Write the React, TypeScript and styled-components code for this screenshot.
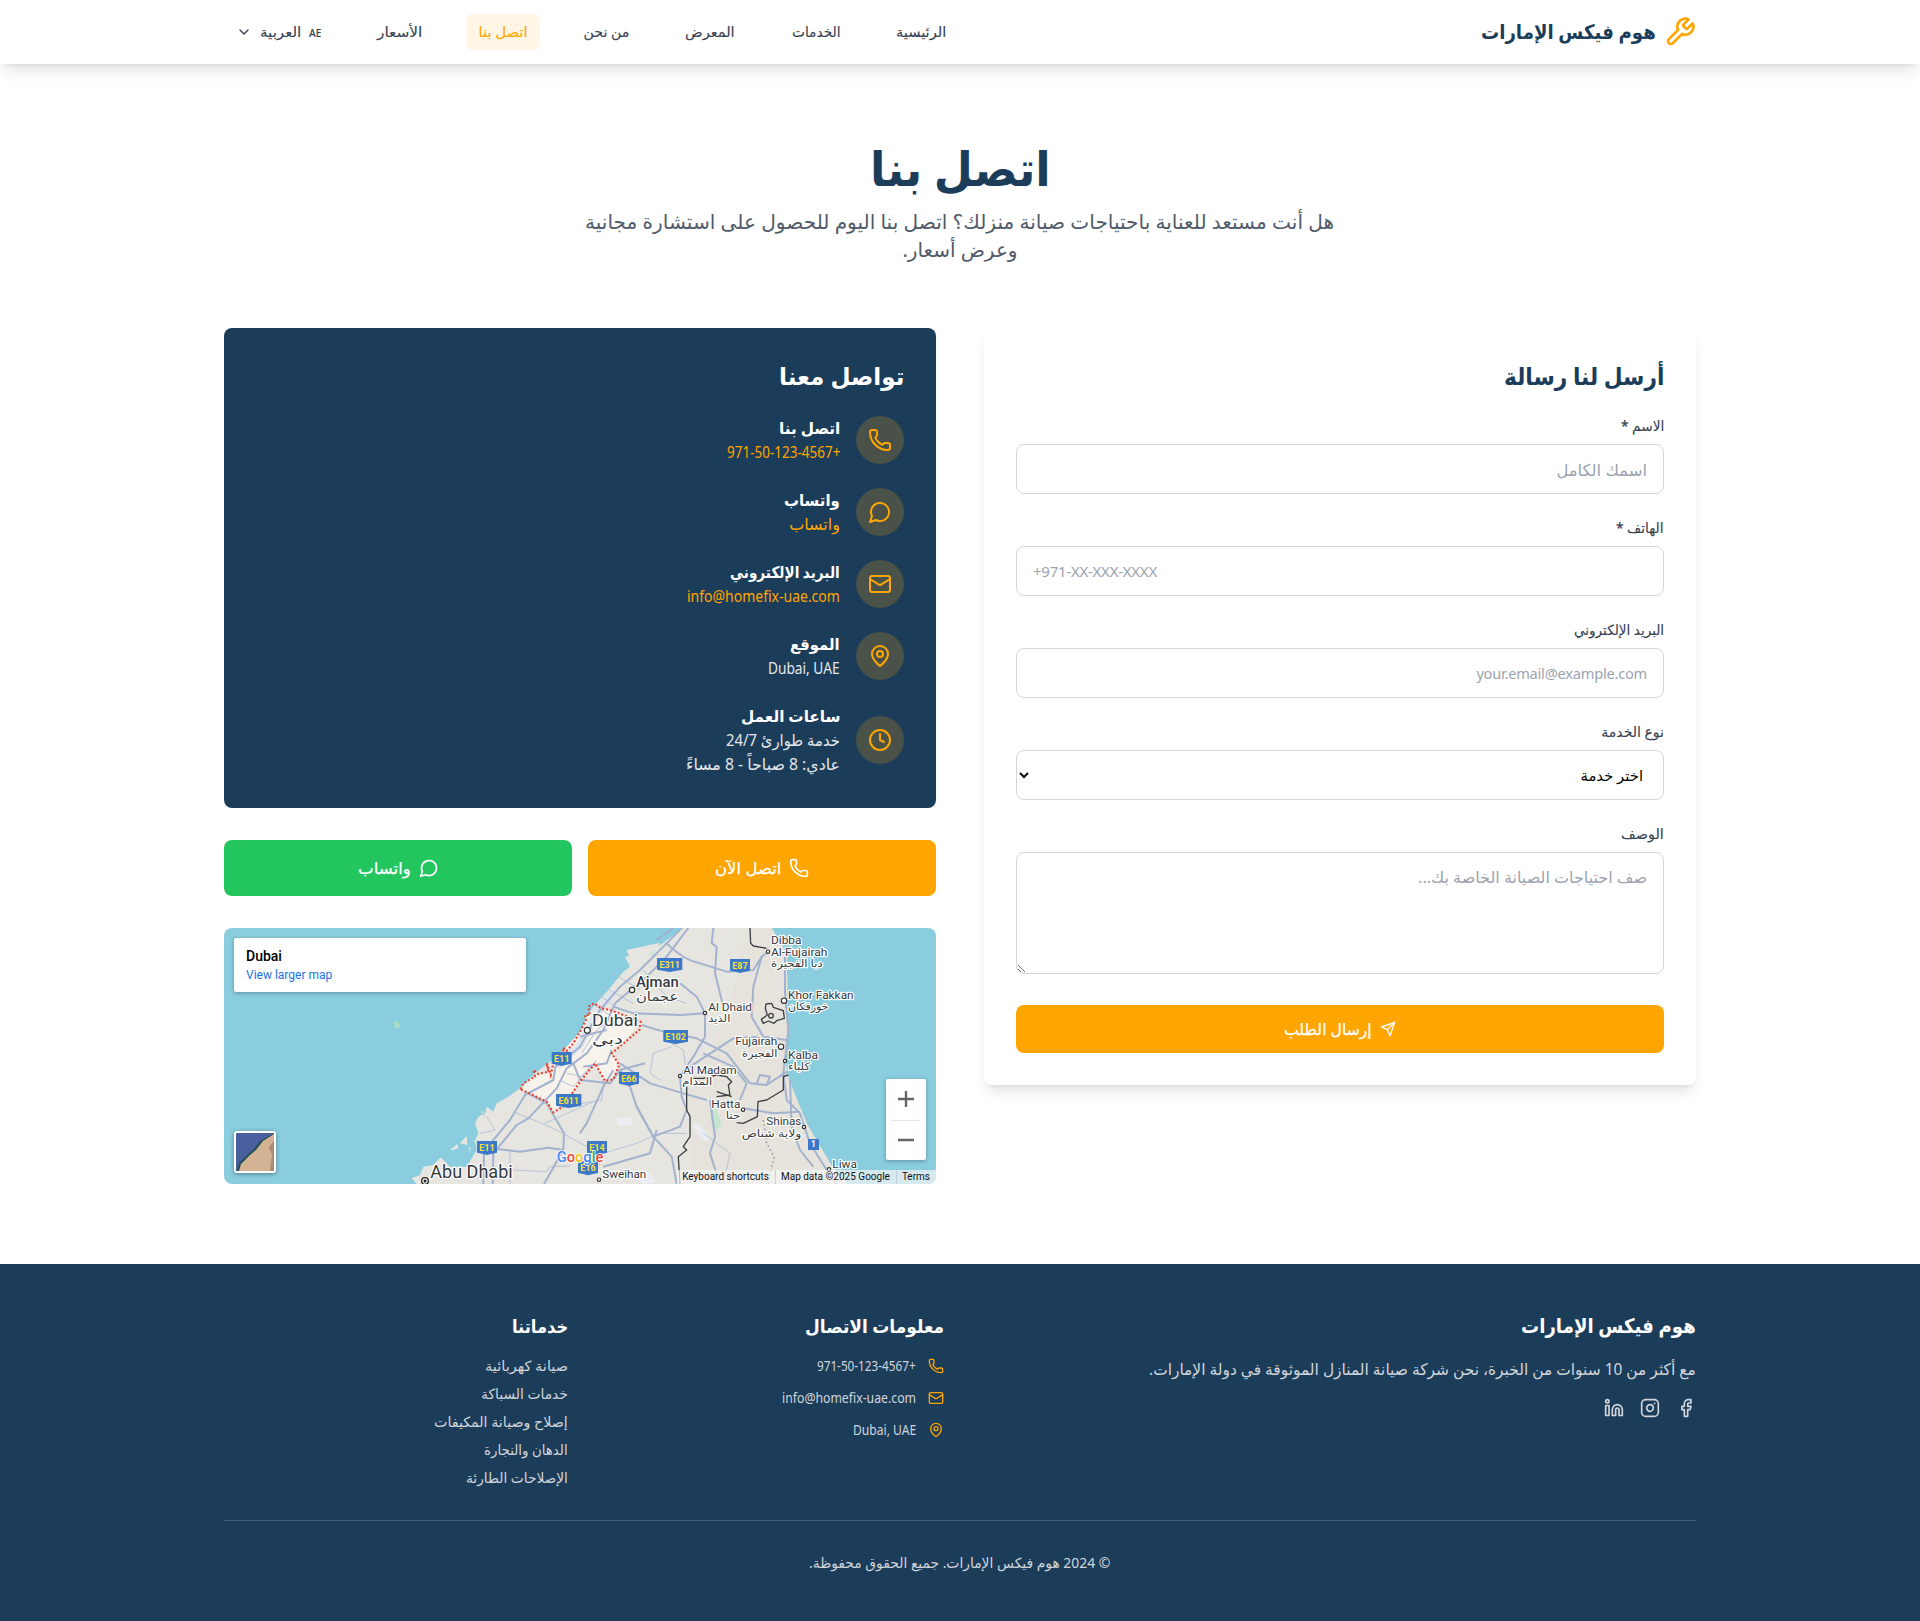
import React, { useLayoutEffect, useRef, useState } from "react";
import styled, { createGlobalStyle, css } from "styled-components";
import { ChevronDown, Phone, Clock, Facebook, Instagram, Linkedin } from "lucide-react";

const navy = "#1c3d5a";
const orange = "#ffa500";
const sans = `"Noto Sans", "DejaVu Sans", sans-serif`;

const GlobalStyle = createGlobalStyle`
  *, *::before, *::after { box-sizing: border-box; }
  body { margin: 0; background: #fff; font-family: ${sans}; font-size: 16px; line-height: 24px; color: #111827; }
  h1, h2, h3, h4, p, ul { margin: 0; padding: 0; list-style: none; }
  a { color: inherit; text-decoration: none; }
  svg { display: block; flex-shrink: 0; }
`;

/* Stroke icons on a 24 unit grid */
type IconProps = { size: number };
const outline = (shape: React.ReactNode) =>
  function OutlineIcon({ size }: IconProps) {
    return (
      <svg width={size} height={size} viewBox="0 0 24 24" fill="none" stroke="currentColor" strokeWidth="2" strokeLinecap="round" strokeLinejoin="round">
        {shape}
      </svg>
    );
  };
const Wrench = outline(
  <path d="M14.7 6.3a1 1 0 0 0 0 1.4l1.6 1.6a1 1 0 0 0 1.4 0l3.77-3.77a6 6 0 0 1-7.94 7.94l-6.91 6.91a2.12 2.12 0 0 1-3-3l6.91-6.91a6 6 0 0 1 7.94-7.94l-3.76 3.76z" />
);
const MessageCircle = outline(<path d="M7.9 20A9 9 0 1 0 4 16.1L2 22Z" />);
const Mail = outline(
  <>
    <rect width="20" height="16" x="2" y="4" rx="2" />
    <path d="m22 7-8.97 5.7a1.94 1.94 0 0 1-2.06 0L2 7" />
  </>
);
const MapPin = outline(
  <>
    <path d="M20 10c0 6-8 12-8 12s-8-6-8-12a8 8 0 0 1 16 0Z" />
    <circle cx="12" cy="10" r="3" />
  </>
);
const Send = outline(
  <>
    <path d="m22 2-7 20-4-9-9-4Z" />
    <path d="M22 2 11 13" />
  </>
);

/* Keeps a label at a set measure whichever fallback font is in use. */
const FitOuter = styled.span<{ $w: number }>`
  display: inline-block;
  width: ${(p) => p.$w}px;
  white-space: nowrap;
  text-align: start;
  vertical-align: top;
`;
const FitInner = styled.span`
  display: inline-block;
  transform-origin: 100% 50%;
`;
function Fit({ w, children }: { w: number; children: React.ReactNode }) {
  const ref = useRef<HTMLSpanElement>(null);
  const [scale, setScale] = useState(1);
  useLayoutEffect(() => {
    if (ref.current) setScale(w / ref.current.offsetWidth);
  }, [w]);
  return (
    <FitOuter $w={w}>
      <FitInner ref={ref} style={{ transform: `scaleX(${scale})` }}>{children}</FitInner>
    </FitOuter>
  );
}

const medium = css`
  font-weight: 500;
  -webkit-text-stroke: 0.12px currentColor;
`;

const Page = styled.div`
  display: flex;
  flex-direction: column;
  min-height: 1621px;
`;
const Container = styled.div`
  width: 1472px;
  margin: 0 auto;
`;

/* Header */
const Header = styled.header`
  height: 64px;
  background: #fff;
  box-shadow: 0 10px 15px -3px rgba(0, 0, 0, 0.1), 0 4px 6px -4px rgba(0, 0, 0, 0.1);
`;
const HeaderRow = styled(Container)`
  height: 64px;
  display: flex;
  align-items: center;
  justify-content: space-between;
`;
const Logo = styled.a`
  display: flex;
  align-items: center;
  gap: 8px;
  color: ${navy};
  font-size: 20px;
  line-height: 28px;
  font-weight: 700;
  svg { color: ${orange}; }
`;
const Nav = styled.nav`
  display: flex;
  align-items: center;
  gap: 32px;
`;
const NavLink = styled.a<{ $active?: boolean }>`
  padding: 8px 12px;
  border-radius: 6px;
  font-size: 14px;
  line-height: 20px;
  ${medium}
  color: ${(p) => (p.$active ? orange : "#374151")};
  background: ${(p) => (p.$active ? "rgba(255,165,0,0.1)" : "transparent")};
`;
const Language = styled.button`
  display: flex;
  align-items: center;
  gap: 8px;
  padding: 8px 12px;
  border: 0;
  background: none;
  font: 500 14px/20px ${sans};
  ${medium}
  color: #374151;
`;
const Code = styled.span`
  font-size: 11px;
  padding-top: 1px;
`;

/* Hero */
const Main = styled.main`
  padding: 80px 0;
`;
const Hero = styled.section`
  text-align: center;
  margin-bottom: 64px;
`;
const Title = styled.h1`
  font-size: 48px;
  line-height: 48px;
  font-weight: 700;
  color: ${navy};
  margin-bottom: 16px;
`;
const Lead = styled.p`
  width: 768px;
  margin: 0 auto;
  display: flex;
  flex-direction: column;
  align-items: center;
  font-size: 20px;
  line-height: 28px;
  color: #525b69;
`;

/* Columns */
const Columns = styled.div`
  display: grid;
  grid-template-columns: 1fr 1fr;
  gap: 48px;
  align-items: start;
`;
const FormCard = styled.form`
  padding: 32px;
  border-radius: 8px;
  background: #fff;
  box-shadow: 0 10px 15px -3px rgba(0, 0, 0, 0.1), 0 4px 6px -4px rgba(0, 0, 0, 0.1);
`;
const CardTitle = styled.h2<{ $light?: boolean }>`
  font-size: 24px;
  line-height: 32px;
  font-weight: 700;
  margin-bottom: 24px;
  color: ${(p) => (p.$light ? "#fff" : navy)};
`;
const Field = styled.div`
  display: flex;
  flex-direction: column;
  margin-bottom: 24px;
`;
const Label = styled.label`
  font-size: 14px;
  line-height: 20px;
  ${medium}
  color: #374151;
  margin-bottom: 8px;
`;
type ControlProps = { $size?: number; $tracking?: number };
const control = css<ControlProps>`
  width: 100%;
  padding: 12px 16px;
  border: 1px solid #d1d5db;
  border-radius: 8px;
  background: #fff;
  font: 400 ${(p) => p.$size ?? 16}px/24px ${sans};
  letter-spacing: ${(p) => p.$tracking ?? 0}px;
  color: #000;
  &::placeholder { color: #9ca3af; opacity: 1; }
`;
const Input = styled.input<ControlProps>`
  ${control}
  height: 50px;
`;
const Select = styled.select<ControlProps>`
  ${control}
  height: 50px;
`;
const Textarea = styled.textarea<ControlProps>`
  ${control}
  height: 122px;
  margin-bottom: 7px;
`;
const Button = styled.button<{ $color: string; $height: number }>`
  width: 100%;
  height: ${(p) => p.$height}px;
  display: flex;
  align-items: center;
  justify-content: center;
  gap: 8px;
  border: 0;
  border-radius: 8px;
  background: ${(p) => p.$color};
  color: #fff;
  font: 500 16px/24px ${sans};
  -webkit-text-stroke: 0.25px currentColor;
`;

const Side = styled.div`
  display: flex;
  flex-direction: column;
  gap: 32px;
`;
const InfoCard = styled.section`
  padding: 32px;
  border-radius: 8px;
  background: ${navy};
  color: #fff;
`;
const InfoList = styled.ul`
  display: flex;
  flex-direction: column;
  gap: 24px;
`;
const InfoItem = styled.li`
  display: flex;
  align-items: center;
  gap: 16px;
`;
const IconDisc = styled.div`
  width: 48px;
  height: 48px;
  border-radius: 50%;
  display: flex;
  align-items: center;
  justify-content: center;
  background: rgba(255, 165, 0, 0.2);
  color: ${orange};
`;
const InfoText = styled.div`
  display: flex;
  flex-direction: column;
  align-items: flex-start;
`;
const InfoName = styled.h3`
  font-size: 16px;
  line-height: 24px;
  font-weight: 700;
`;
const InfoValue = styled.p<{ $link?: boolean }>`
  line-height: 24px;
  color: ${(p) => (p.$link ? orange : "#e5e7eb")};
`;
const Actions = styled.div`
  display: grid;
  grid-template-columns: 1fr 1fr;
  gap: 16px;
`;

/* Map */
const MapFrame = styled.div`
  position: relative;
  height: 256px;
  border-radius: 8px;
  overflow: hidden;
  direction: ltr;
  font-family: Roboto, "DejaVu Sans", sans-serif;
`;
const MapCard = styled.div`
  position: absolute;
  left: 10px;
  top: 10px;
  width: 292px;
  height: 54px;
  padding: 9px 12px;
  background: #fff;
  border-radius: 2px;
  box-shadow: 0 1px 4px rgba(0, 0, 0, 0.3);
`;
const MapPlace = styled.div`
  font-size: 14px;
  line-height: 19px;
  font-weight: 500;
  color: #000;
`;
const MapLink = styled.div`
  font-size: 12px;
  line-height: 18px;
  color: #1a73e8;
`;
const Zoom = styled.div`
  position: absolute;
  right: 10px;
  bottom: 24px;
  width: 40px;
  height: 81px;
  display: flex;
  flex-direction: column;
  background: #fff;
  border-radius: 2px;
  box-shadow: 0 1px 4px rgba(0, 0, 0, 0.3);
`;
const ZoomHalf = styled.div`
  flex: 1;
  display: flex;
  align-items: center;
  justify-content: center;
  & + & { box-shadow: inset 0 1px 0 #e6e6e6; margin: 0 5px; }
`;
const Satellite = styled.div`
  position: absolute;
  left: 10px;
  bottom: 11px;
  width: 42px;
  height: 42px;
  border: 2px solid #fff;
  border-radius: 3px;
  overflow: hidden;
  box-shadow: 0 1px 4px rgba(0, 0, 0, 0.4);
`;
const Credits = styled.div`
  position: absolute;
  right: 0;
  bottom: 0;
  height: 14px;
  display: flex;
  font-size: 10px;
  line-height: 14px;
  color: #111;
  background: rgba(245, 245, 245, 0.7);
  span { padding: 0 6px 0 5px; white-space: nowrap; }
  span + span { border-left: 1px solid rgba(190, 205, 215, 0.9); }
`;

/* label, x, baseline, font size, drawn width */
type Place = [string, number, number, number, number];
const places: Place[] = [
  ["Abu Dhabi", 631, 773, 53, 247], ["Dubai", 1116, 318, 51, 138], ["دبي", 1116, 372, 40, 93],
  ["Ajman", 1248, 200, 42, 128], ["عجمان", 1248, 242, 38, 127],
  ["Dibba", 1653, 71, 35, 91], ["Al-Fujairah", 1653, 107, 35, 169], ["دبا الفجيرة", 1653, 141, 31, 155],
  ["Khor Fakkan", 1704, 236, 35, 197], ["خورفكان", 1704, 270, 31, 121],
  ["Al Dhaid", 1465, 273, 35, 131], ["الذيد", 1465, 306, 31, 66],
  ["Fujairah", 1546, 375, 35, 126], ["الفجيرة", 1566, 410, 31, 106],
  ["Kalba", 1704, 416, 35, 90], ["كلباء", 1704, 450, 31, 66],
  ["Al Madam", 1390, 461, 35, 160], ["المدام", 1387, 496, 31, 90],
  ["Hatta", 1474, 564, 35, 87], ["حتا", 1517, 598, 31, 44],
  ["Shinas", 1639, 615, 35, 105], ["ولاية شناص", 1565, 650, 31, 179],
  ["Liwa", 1837, 744, 35, 74], ["Sweihan", 1147, 774, 35, 132],
];
const shields: [string, number, number, number][] = [
  ["E11", 995, 396, 60], ["E611", 1008, 522, 76], ["E11", 771, 663, 60],
  ["E311", 1311, 114, 76], ["E87", 1530, 117, 60], ["E102", 1330, 330, 74],
  ["E66", 1197, 456, 60], ["E14", 1101, 663, 60], ["E16", 1074, 724, 60],
];
const towns: [number, number, number][] = [
  [1102, 331, 9], [1236, 210, 8], [1455, 279, 5], [1644, 95, 5], [1692, 242, 8],
  [1683, 380, 8], [1695, 423, 5], [1380, 468, 5], [1569, 569, 5], [1752, 621, 5],
  [1827, 748, 5], [1137, 779, 5],
];
const mainRoads = [
  "M790 792 L792 700 820 660 870 600 915 525 1000 480 1006 440 1080 380 1140 270 1200 200 1260 150 1360 50 1385 24",
  "M818 792 L820 700 890 615 925 595 1010 505 1040 445 1100 400 1150 330 1185 250 1280 170 1340 110 1405 24",
  "M830 687 L900 695 985 683 1030 690 M1080 640 L1100 610 1150 500 1180 450",
  "M915 515 L980 550 1032 640 1030 690 972 792",
  "M1060 430 L1080 480 1170 490 1200 450 1275 430 M1200 430 L1290 490 1390 520 1460 540 M1570 565 L1660 580 1740 575",
  "M1080 350 L1160 330 M1265 315 L1330 335 1430 355 1520 400 1590 490",
  "M1180 260 L1240 280 1380 285 1455 280",
  "M1310 60 L1360 24 M1340 70 Q1390 120 1440 130 L1520 155 1600 150 1625 110 1644 95",
  "M1480 24 L1475 70 1490 80 1485 160 1510 260",
  "M1625 110 L1600 200 1595 290 1630 350 1700 360",
  "M1380 190 L1430 230 1455 280 1455 350 1420 410 1380 470 1385 530 1400 570 1380 620 1300 650 1250 560 1230 500 1200 450",
  "M1250 560 L1300 650 1355 710 1370 792",
  "M1470 540 L1485 650 1470 700 1500 792",
  "M1695 110 L1695 220 1705 330 1690 460 1700 540 1740 580 1770 670 1820 750 1850 792",
  "M1710 480 L1715 620 1740 690 1780 740",
  "M1410 440 L1540 355 1620 350 M1450 400 L1540 440 1580 490 1560 540",
  "M1590 490 L1640 495 1700 455 M1610 490 L1620 465 1650 470 1640 495",
  "M1090 440 L1160 430 1175 390 M1150 740 L1290 700 1310 630",
];
const thinRoads = [
  "M880 575 L1000 625 1120 690 M870 690 L870 792 M880 750 L980 755 990 740 1050 738",
  "M975 610 L1120 545 M1030 560 L1145 540 1150 490 M780 640 L825 630 800 590 780 575",
  "M1355 380 L1300 400 1290 460 1320 480 M1355 370 L1390 390 1400 460 M1270 150 L1340 230 1400 250",
  "M1150 700 L1250 670 1320 640 1400 640 M1450 640 L1530 700 1510 792",
  "M1040 460 L1090 470 1130 420 M1020 480 L1060 500 1110 440 M1085 400 L1130 330 1170 300",
  "M1115 250 L1190 300 M1130 220 L1200 270 M1150 200 L1240 250 M1180 160 L1260 210",
];
const borders = [
  "M1590 24 L1592 70 1600 78 1640 85 M1638 252 L1655 250 1660 262 1690 272 1693 295 1670 302 1662 310 1645 303 1630 310 1624 298 1642 285 1636 265Z",
  "M1400 500 L1400 570 1410 590 1410 650 1390 680 1400 690 1375 710 1380 792",
  "M1490 530 L1530 525 1525 495 1535 485 1520 470 1490 465 1450 475 1420 475",
  "M1490 515 L1535 530 M1550 608 L1570 610 1612 590 1614 545 1640 540 1690 510 1690 470 1705 465",
];

function MapArt() {
  return (
    <svg width="712" height="256" viewBox="12 24 2136 768">
      <rect x="12" y="24" width="2136" height="768" fill="#89cddf" />
      <path fill="#e7e5e0" d="M575 775 L600 765 610 740 640 735 662 712 690 740 740 740 770 690 765 660 775 640 765 610 775 590 795 580 800 560 820 575 830 550 865 530 900 505 945 460 985 430 1030 390 1080 335 1100 290 1120 260 1160 215 1210 155 1230 140 1215 110 1245 105 1275 82 1320 75 1390 24 1655 24 1700 100 1702 200 1696 260 1705 330 1697 400 1700 460 1730 540 1760 610 1800 690 1840 745 1880 792 590 792Z" />
      <path fill="#e5e3db" d="M1580 24 L1655 24 1700 100 1702 200 1705 330 1697 400 1700 460 1760 610 1840 745 1880 792 1420 792 1400 500 1520 300Z" />
      <path fill="#e7e5e0" d="M690 690 L712 672 715 685 700 690Z M720 670 L740 648 742 675Z M1220 90 L1320 68 1310 82 1260 100 1235 130Z" />
      <g fill="#eaedf1">
        <rect x="1190" y="593" width="48" height="25" rx="10" />
        <path d="M1415 610 L1440 612 1470 655 1460 668 1430 640Z M1230 760 L1290 755 1310 785 1270 792Z" />
      </g>
      <path fill="#c3e5d2" d="M1475 560 L1490 565 1505 620 1485 630 1472 600Z M785 570 L793 578 785 580Z M760 665 L775 655 770 670Z M745 685 L752 680 750 695Z M1285 105 L1305 88 1300 108Z" />
      <path fill="#a9dfc0" d="M520 305 L533 303 540 315 538 324 525 323Z" />
      <path fill="#f7f3ea" d="M902 508 L945 465 990 455 1025 400 1080 335 1110 275 1170 270 1262 310 1175 400 1198 435 1180 480 1155 483 1125 430 1080 490 1000 577 980 545Z" />
      <g fill="none" stroke="#dfe5ee" strokeWidth="22" strokeLinejoin="round">
        <path d="M1010 440 L1080 375 1125 290 1180 215" />
      </g>
      <g fill="none" stroke="#b5c3da" strokeWidth="3" strokeLinejoin="round">{thinRoads.map((d) => <path key={d} d={d} />)}</g>
      <g fill="none" stroke="#a3b2cf" strokeWidth="6" strokeLinejoin="round">{mainRoads.map((d) => <path key={d} d={d} />)}</g>
      <g fill="none" stroke="#3c4043" strokeWidth="4" strokeLinejoin="round">
        {borders.map((d) => <path key={d} d={d} />)}
        <circle cx="1653" cy="287" r="7" />
        <path d="M1630 600 L1640 670 1662 710 1645 792" stroke="#8b9199" strokeDasharray="5 8" />
      </g>
      <path fill="none" stroke="#ea4335" strokeWidth="6.5" strokeDasharray="6 6" d="M902 508 L910 490 945 470 940 450 955 462 985 455 980 430 992 465 1000 430 1030 395 1030 383 1040 393 1060 370 1080 335 1098 300 1095 285 1110 285 1105 260 1122 250 1145 265 1170 270 1262 305 1258 330 1175 400 1198 435 1180 478 1155 483 1125 430 1080 485 1030 560 1000 577 980 545Z" />
      {shields.map(([t, x, y, w]) => (
        <g key={t + x}>
          <path fill="#3b78c9" d={`M${x} ${y} h${w} v35 q-15 2 -${w / 2} 7 q-${w / 2 - 15} -5 -${w / 2} -7Z`} />
          <text x={x + w / 2} y={y + 30} textAnchor="middle" fontSize="27" fontWeight="700" fill="#f7e03c">{t}</text>
        </g>
      ))}
      <rect x="1764" y="657" width="33" height="33" fill="#3b78c9" />
      <text x="1780" y="682" textAnchor="middle" fontSize="25" fontWeight="700" fill="#fff">1</text>
      <g fill="#fff" stroke="#333" strokeWidth="3.5">{towns.map(([x, y, r]) => <circle key={`${x}-${y}`} cx={x} cy={y} r={r} />)}</g>
      <circle cx="615" cy="783" r="10" fill="#fff" stroke="#222" strokeWidth="4" />
      <circle cx="615" cy="783" r="4.5" fill="#222" />
      <g fill="#34373b" stroke="#fff" strokeWidth="7" strokeLinejoin="round" paintOrder="stroke">
        {places.map(([t, x, y, s, w]) => (
          <text key={t} x={x} y={y} fontSize={s} fontWeight={s === 42 ? 500 : 400} textLength={w} lengthAdjust="spacingAndGlyphs">{t}</text>
        ))}
      </g>
      <text x="1010" y="727" fontSize="46" fontWeight="500" stroke="#fff" strokeWidth="5" paintOrder="stroke" textLength="140" lengthAdjust="spacingAndGlyphs"><tspan fill="#4285f4">G</tspan><tspan fill="#ea4335">o</tspan><tspan fill="#fbbc04">o</tspan><tspan fill="#4285f4">g</tspan><tspan fill="#34a853">l</tspan><tspan fill="#ea4335">e</tspan></text>
    </svg>
  );
}

/* Footer */
const Footer = styled.footer`
  background: ${navy};
  color: #fff;
  padding: 48px 0;
  height: 357px;
`;
const FooterGrid = styled.div`
  display: grid;
  grid-template-columns: 720px 344px 344px;
  gap: 32px;
`;
const Brand = styled.h3`
  font-size: 20px;
  line-height: 28px;
  font-weight: 700;
  margin-bottom: 16px;
`;
const About = styled.p`
  line-height: 26px;
  margin-bottom: 16px;
  color: #d1d5db;
`;
const Socials = styled.div`
  display: flex;
  gap: 16px;
  color: #d1d5db;
`;
const FooterTitle = styled.h4`
  font-size: 18px;
  line-height: 28px;
  font-weight: 700;
  margin-bottom: 16px;
`;
const FooterList = styled.ul<{ $gap: number }>`
  display: flex;
  flex-direction: column;
  gap: ${(p) => p.$gap}px;
  font-size: 14px;
  line-height: 20px;
  color: #d1d5db;
`;
const FooterItem = styled.li`
  display: flex;
  align-items: center;
  gap: 12px;
  height: 20px;
  svg { color: ${orange}; }
`;
const Copyright = styled.div`
  margin-top: 32px;
  padding-top: 32px;
  border-top: 1px solid #435d75;
  text-align: center;
  font-size: 14px;
  line-height: 20px;
  color: #d1d5db;
`;

const links: [string, number][] = [
  ["الرئيسية", 50], ["الخدمات", 49], ["المعرض", 50], ["من نحن", 45.5], ["اتصل بنا", 49.5], ["الأسعار", 45],
];
const contacts = [
  { icon: Phone, name: "اتصل بنا", nw: 61, link: true, values: [["+971-50-123-4567", 113]] },
  { icon: MessageCircle, name: "واتساب", nw: 56, link: true, values: [["واتساب", 51]] },
  { icon: Mail, name: "البريد الإلكتروني", nw: 110, link: true, values: [["info@homefix-uae.com", 153]] },
  { icon: MapPin, name: "الموقع", nw: 50, link: false, values: [["Dubai, UAE", 72]] },
  { icon: Clock, name: "ساعات العمل", nw: 99, link: false, values: [["خدمة طوارئ 24/7", 114], ["عادي: 8 صباحاً - 8 مساءً", 154]] },
] as const;
const services: [string, number][] = [
  ["صيانة كهربائية", 83], ["خدمات السباكة", 87], ["إصلاح وصيانة المكيفات", 134],
  ["الدهان والنجارة", 84], ["الإصلاحات الطارئة", 102],
];

export default function App() {
  return (
    <Page dir="rtl" lang="ar">
      <GlobalStyle />
      <Header>
        <HeaderRow>
          <Logo href="#"><Wrench size={32} /><Fit w={175}>هوم فيكس الإمارات</Fit></Logo>
          <Nav>
            {links.map(([t, w]) => (
              <NavLink key={t} href="#" $active={t === "اتصل بنا"}><Fit w={w}>{t}</Fit></NavLink>
            ))}
            <Language>
              <Code><Fit w={12}>AE</Fit></Code>
              <Fit w={41}>العربية</Fit>
              <ChevronDown size={16} />
            </Language>
          </Nav>
        </HeaderRow>
      </Header>

      <Main>
        <Container>
          <Hero>
            <Title><Fit w={181}>اتصل بنا</Fit></Title>
            <Lead>
              <Fit w={749}>هل أنت مستعد للعناية باحتياجات صيانة منزلك؟ اتصل بنا اليوم للحصول على استشارة مجانية</Fit>
              <Fit w={115}>وعرض أسعار.</Fit>
            </Lead>
          </Hero>
          <Columns>
            <FormCard>
              <CardTitle><Fit w={160}>أرسل لنا رسالة</Fit></CardTitle>
              <Field><Label><Fit w={43}>الاسم *</Fit></Label><Input $size={16.4} placeholder="اسمك الكامل" /></Field>
              <Field><Label><Fit w={48}>الهاتف *</Fit></Label><Input dir="ltr" type="tel" $size={15} $tracking={-0.25} placeholder="+971-XX-XXX-XXXX" /></Field>
              <Field><Label><Fit w={90}>البريد الإلكتروني</Fit></Label><Input $size={14.6} $tracking={-0.22} placeholder="your.email@example.com" /></Field>
              <Field><Label><Fit w={63}>نوع الخدمة</Fit></Label><Select $size={14.8}><option>اختر خدمة</option></Select></Field>
              <Field><Label><Fit w={43}>الوصف</Fit></Label><Textarea placeholder="صف احتياجات الصيانة الخاصة بك..." /></Field>
              <Button type="button" $color={orange} $height={48}><Send size={16} /><Fit w={88}>إرسال الطلب</Fit></Button>
            </FormCard>
            <Side>
              <InfoCard>
                <CardTitle $light><Fit w={125}>تواصل معنا</Fit></CardTitle>
                <InfoList>
                  {contacts.map(({ icon: Icon, name, nw, link, values }) => (
                    <InfoItem key={name}>
                      <IconDisc><Icon size={24} /></IconDisc>
                      <InfoText>
                        <InfoName><Fit w={nw}>{name}</Fit></InfoName>
                        {values.map(([v, w]) => <InfoValue key={v} $link={link}><Fit w={w}>{v}</Fit></InfoValue>)}
                      </InfoText>
                    </InfoItem>
                  ))}
                </InfoList>
              </InfoCard>
              <Actions>
                <Button $color={orange} $height={56}><Phone size={20} /><Fit w={66}>اتصل الآن</Fit></Button>
                <Button $color="#22c55e" $height={56}><MessageCircle size={20} /><Fit w={53}>واتساب</Fit></Button>
              </Actions>
              <MapFrame>
                <MapArt />
                <MapCard><MapPlace>Dubai</MapPlace><MapLink>View larger map</MapLink></MapCard>
                <Satellite>
                  <svg width="38" height="38" viewBox="0 0 38 38">
                    <rect width="38" height="38" fill="#4a5f9e" />
                    <path d="M0 38 L3 30 12 21 17 17 24 8 38 0 V38Z" fill="#24505a" />
                    <path d="M3 38 L5 31 14 22 20 17 27 8 38 1 V38Z" fill="#d3b394" />
                    <path d="M34 38 L36 22 33 14 38 8 V38Z" fill="#a98a72" />
                  </svg>
                </Satellite>
                <Zoom>
                  <ZoomHalf><svg width="18" height="18" stroke="#666" strokeWidth="2.4"><path d="M1 9H17M9 1V17" /></svg></ZoomHalf>
                  <ZoomHalf><svg width="18" height="18" stroke="#666" strokeWidth="2.4"><path d="M1 9H17" /></svg></ZoomHalf>
                </Zoom>
                <Credits><span>Keyboard shortcuts</span><span>Map data ©2025 Google</span><span>Terms</span></Credits>
              </MapFrame>
            </Side>
          </Columns>
        </Container>
      </Main>

      <Footer>
        <Container>
          <FooterGrid>
            <div>
              <Brand><Fit w={175}>هوم فيكس الإمارات</Fit></Brand>
              <About><Fit w={547}>مع أكثر من 10 سنوات من الخبرة، نحن شركة صيانة المنازل الموثوقة في دولة الإمارات.</Fit></About>
              <Socials><Facebook size={20} /><Instagram size={20} /><Linkedin size={20} /></Socials>
            </div>
            <div>
              <FooterTitle><Fit w={139}>معلومات الاتصال</Fit></FooterTitle>
              <FooterList $gap={12}>
                <FooterItem><Phone size={16} /><Fit w={99}>+971-50-123-4567</Fit></FooterItem>
                <FooterItem><Mail size={16} /><Fit w={134}>info@homefix-uae.com</Fit></FooterItem>
                <FooterItem><MapPin size={16} /><Fit w={63}>Dubai, UAE</Fit></FooterItem>
              </FooterList>
            </div>
            <div>
              <FooterTitle><Fit w={56}>خدماتنا</Fit></FooterTitle>
              <FooterList $gap={8}>
                {services.map(([t, w]) => <FooterItem key={t}><Fit w={w}>{t}</Fit></FooterItem>)}
              </FooterList>
            </div>
          </FooterGrid>
          <Copyright><Fit w={301}>© 2024 هوم فيكس الإمارات. جميع الحقوق محفوظة.</Fit></Copyright>
        </Container>
      </Footer>
    </Page>
  );
}
